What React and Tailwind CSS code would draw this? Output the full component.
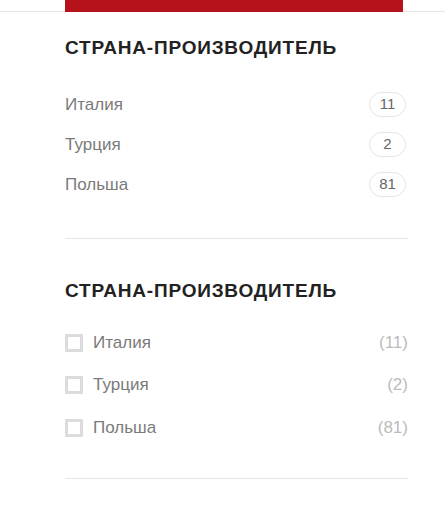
import React from 'react';

// Country filter: two variants of the same sidebar block
const countries = [
  { name: 'Италия', count: 11 },
  { name: 'Турция', count: 2 },
  { name: 'Польша', count: 81 },
];

function Heading({ children }) {
  return (
    <h3 className="text-[19px] leading-[22px] font-bold uppercase tracking-[0.8px] text-[#222]">
      {children}
    </h3>
  );
}

export default function App() {
  return (
    <div className="w-[445px] min-h-[516px] bg-white font-['Liberation_Sans',Arial,sans-serif]">
      {/* Top strip: red bar sitting on a thin grey rule */}
      <div className="flex h-[12px]">
        <div className="w-[65px] border-b border-[#e6e6e6]" />
        <div className="w-[338px] bg-[#b5121b]" />
        <div className="flex-1 border-b border-[#e6e6e6]" />
      </div>

      <div className="ml-[65px] w-[343px]">
        {/* Variant with pill counters */}
        <div className="pt-[25px] pb-[41px] border-b border-[#e6e6e6]">
          <Heading>Страна-производитель</Heading>
          <ul className="mt-[33px] flex flex-col gap-[15px]">
            {countries.map((c) => (
              <li key={c.name} className="flex items-center justify-between h-[25px]">
                <span className="text-[17px] text-[#7a7a7a]">{c.name}</span>
                <span className="mr-[2px] flex items-center justify-center w-[37px] h-[25px] rounded-full border border-[#e6e6e6] text-[15px] text-[#666]">
                  {c.count}
                </span>
              </li>
            ))}
          </ul>
        </div>

        {/* Variant with checkboxes */}
        <div className="pt-[41px] pb-[38px] border-b border-[#e6e6e6]">
          <Heading>Страна-производитель</Heading>
          <ul className="mt-[28px] flex flex-col gap-[17.5px]">
            {countries.map((c) => (
              <li key={c.name} className="flex items-center h-[25px]">
                <span className="w-[18px] h-[18px] border-[3px] border-[#dcdcdc] shrink-0" />
                <span className="ml-[10px] text-[17px] text-[#7a7a7a]">{c.name}</span>
                <span className="ml-auto text-[17px] text-[#bbb]">({c.count})</span>
              </li>
            ))}
          </ul>
        </div>
      </div>
    </div>
  );
}
